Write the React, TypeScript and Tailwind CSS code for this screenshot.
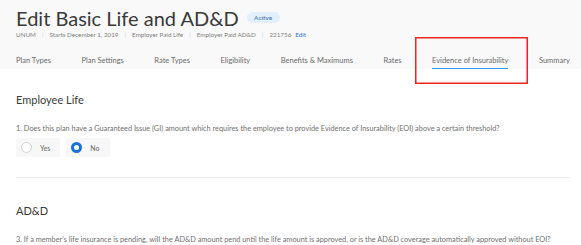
const TABS = [
  'Plan Types',
  'Plan Settings',
  'Rate Types',
  'Eligibility',
  'Benefits & Maximums',
  'Rates',
  'Evidence of Insurability',
  'Summary',
];

const META = ['UNUM', 'Starts December 1, 2019', 'Employer Paid Life', 'Employer Paid AD&D'];

function Radio({ label, checked }: { label: string; checked?: boolean }) {
  return (
    <div className="h-[19px] flex items-center gap-[8px] pl-[5px] pr-[10px] bg-[#f7f7f7] rounded-[2px]">
      {checked ? (
        <span className="w-[11px] h-[11px] rounded-full bg-[#1a6fe0] flex items-center justify-center">
          <span className="w-[5px] h-[5px] rounded-full bg-white" />
        </span>
      ) : (
        <span className="w-[11px] h-[11px] rounded-full bg-white border text-[#d4d4d4]" />
      )}
      <span className="text-[7px] text-[#666]">{label}</span>
    </div>
  );
}

export default function App() {
  return (
    <div className="w-[581px] h-[245px] overflow-hidden bg-white text-[#333] font-['Lato',sans-serif] relative">
      {/* Header */}
      <div className="bg-[#f9f9f9] h-[69px] px-[16px] pt-[7px]">
        <div className="flex items-center gap-[8px] h-[21px]">
          <h1 className="text-[20px] leading-none text-[#3a3a3a]">Edit Basic Life and AD&amp;D</h1>
          <span className="h-[11px] w-[33px] rounded-full bg-[#e2f0fb] text-[#3b6db3] text-[6.5px] flex items-center justify-center">
            Active
          </span>
        </div>
        <div className="flex items-center h-[12px] mt-[1px] text-[6.3px] text-[#808080]">
          {META.map(m => (
            <span key={m} className="flex items-center">
              {m}
              <span className="mx-[6px] text-[#d0d0d0]">|</span>
            </span>
          ))}
          <span>221756</span>
          <span className="ml-[4px] text-[#2b6fd6]">Edit</span>
        </div>

        {/* Tabs */}
        <div className="flex gap-[30.5px] mt-[14px] text-[7.5px] text-[#6a6a6a]">
          {TABS.map(t => (
            <div key={t} className="relative h-[15px] flex items-start whitespace-nowrap">
              <span>{t}</span>
              {t === 'Evidence of Insurability' && (
                <span className="absolute left-0 right-0 bottom-[1px] h-[1.5px] bg-[#2d9cf0]" />
              )}
            </div>
          ))}
        </div>
      </div>

      {/* Employee Life */}
      <div className="px-[16px]">
        <h2 className="text-[11px] text-[#3a3a3a] mt-[25px] leading-none">Employee Life</h2>
        <p className="text-[7.35px] text-[#707070] mt-[20px] leading-none">
          1. Does this plan have a Guaranteed Issue (GI) amount which requires the employee to provide Evidence of Insurability (EOI) above a certain threshold?
        </p>
        <div className="flex gap-[6px] mt-[6px]">
          <Radio label="Yes" />
          <Radio label="No" checked />
        </div>
        <div className="h-px bg-[#ececec] mt-[20px] w-[554px]" />

        <h2 className="text-[11px] text-[#3a3a3a] mt-[27px] leading-none">AD&amp;D</h2>
        <p className="text-[7.35px] text-[#707070] mt-[20px] leading-none">
          3. If a member's life insurance is pending, will the AD&amp;D amount pend until the life amount is approved, or is the AD&amp;D coverage automatically approved without EOI?
        </p>
      </div>

      {/* Annotation box */}
      <svg className="absolute left-[415px] top-[37px]" width="113" height="47" viewBox="0 0 113 47">
        <rect x="0.75" y="0.75" width="111.5" height="45.5" fill="none" stroke="#f0231c" strokeWidth="1.5" />
      </svg>
    </div>
  );
}
